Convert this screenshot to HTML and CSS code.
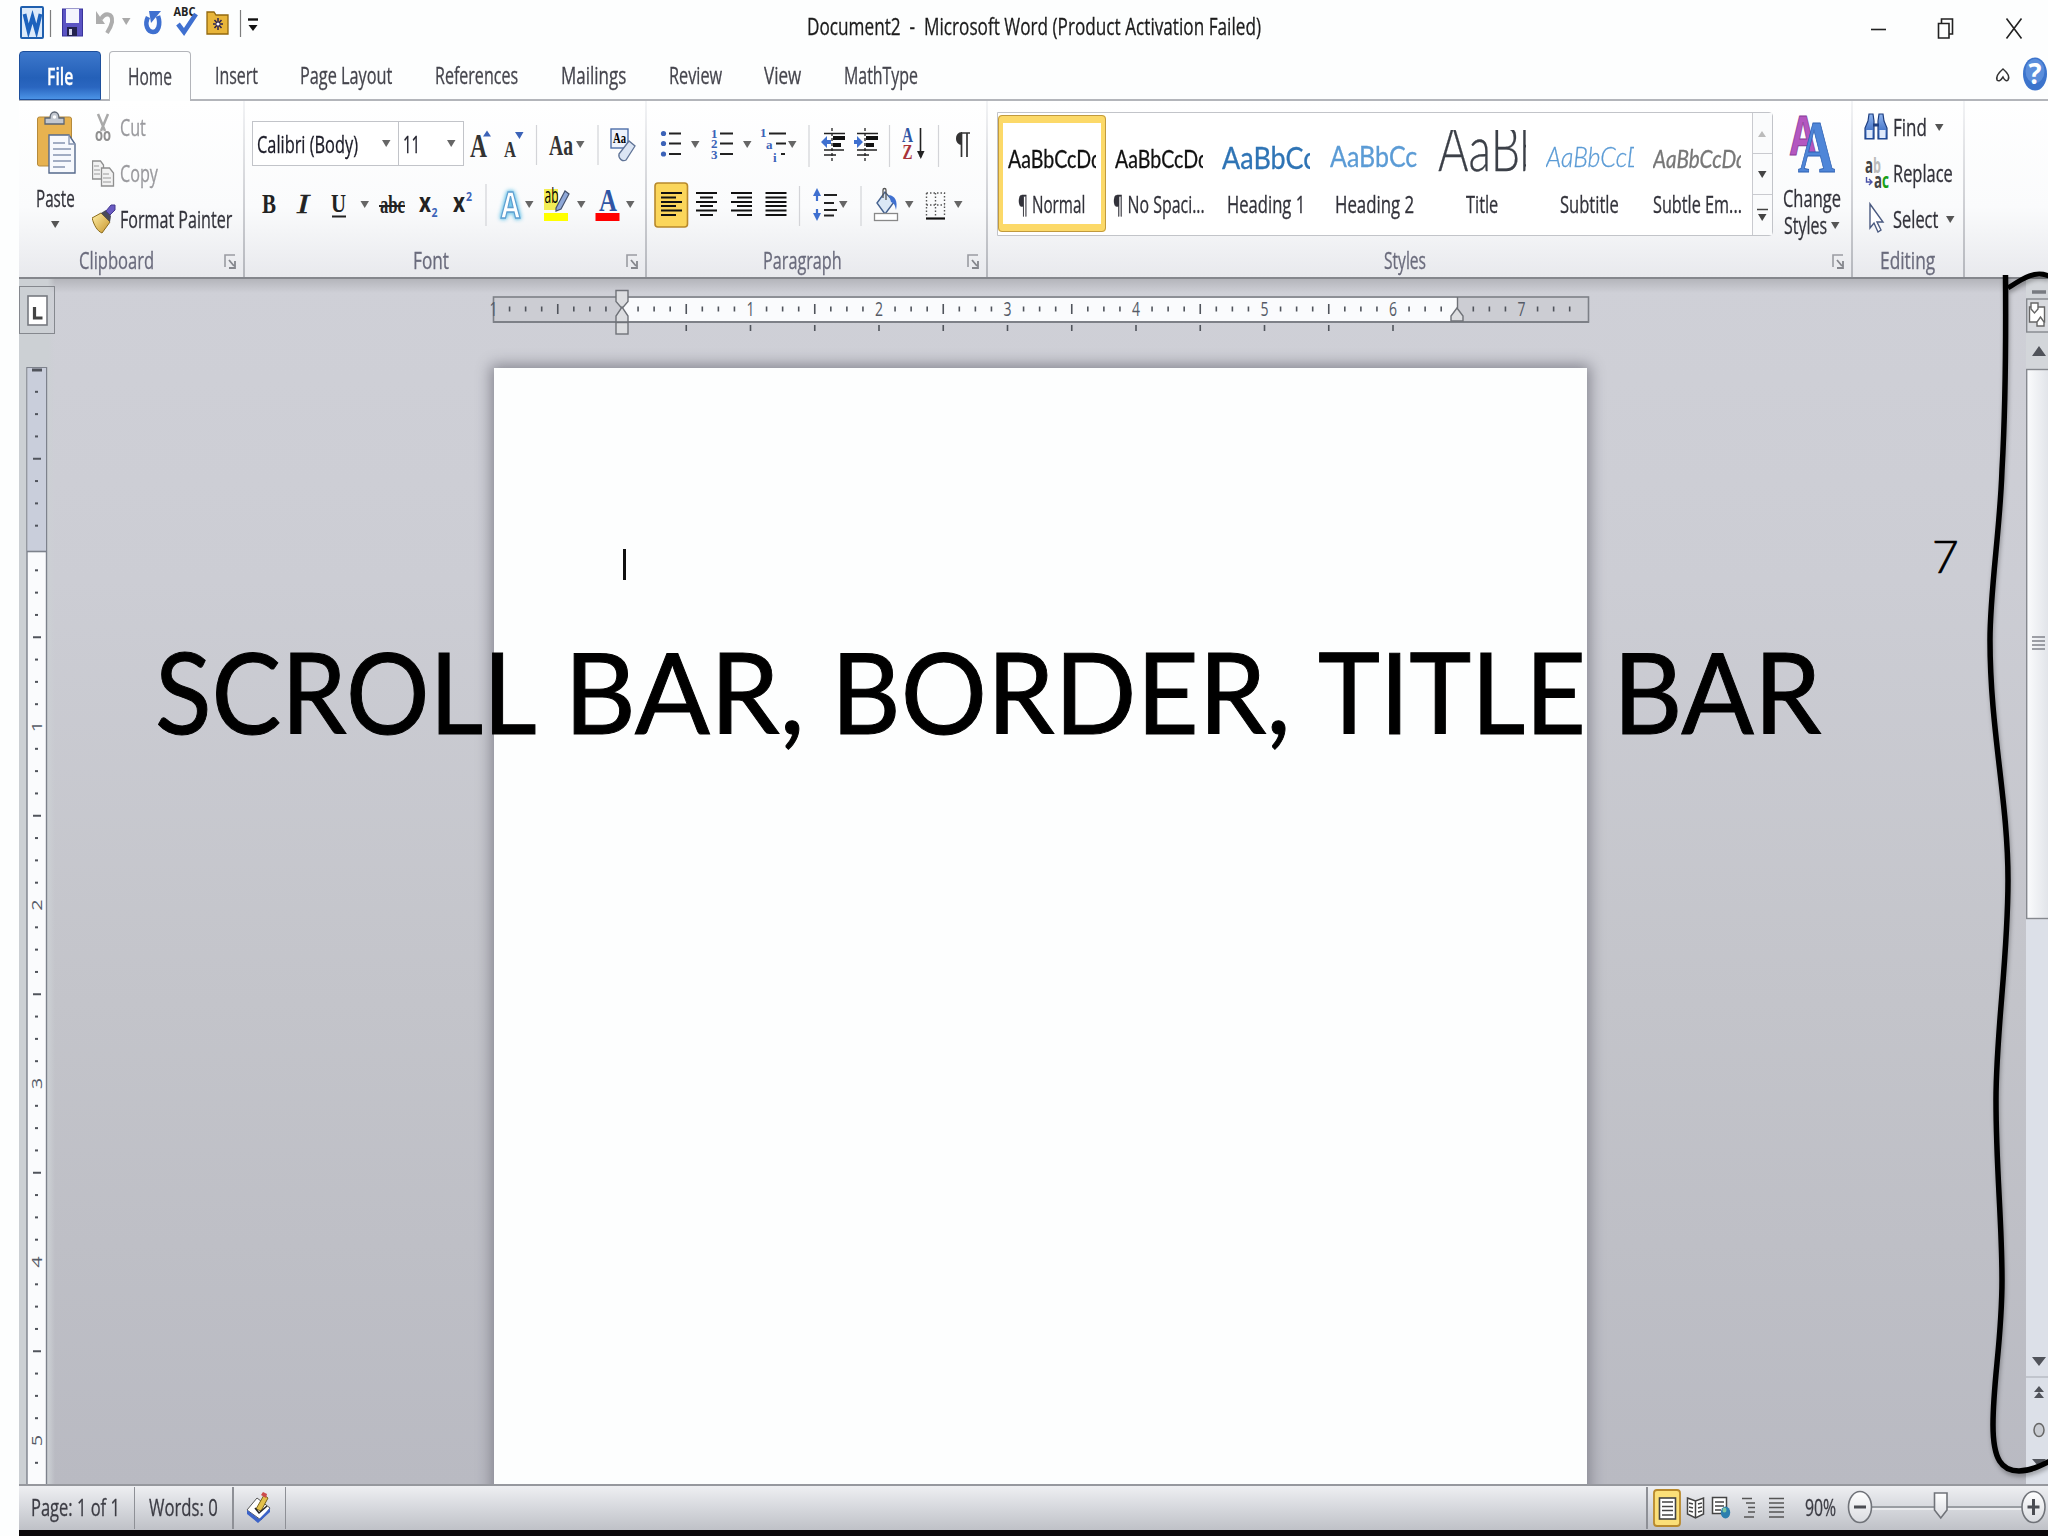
FILE: index.html
```html
<!DOCTYPE html>
<html>
<head>
    <meta charset="utf-8">
    <title>Document2 - Microsoft Word</title>
    <link rel="stylesheet" href="styles.css">
</head>
<body>
<svg width="0" height="0" class="defs">
    <defs>
        <path id="dd" d="M0 0h8.5L4.2 7z"/>
        <linearGradient id="blue" x1="0" y1="0" x2="0" y2="1"><stop offset="0" stop-color="#8fb4ee"/><stop offset="1" stop-color="#2459b8"/></linearGradient>
        <linearGradient id="gold" x1="0" y1="0" x2="1" y2="1"><stop offset="0" stop-color="#fff0a8"/><stop offset="1" stop-color="#c8942a"/></linearGradient>
        <linearGradient id="thumb" x1="0" x2="1"><stop offset="0" stop-color="#fbfcfd"/><stop offset="1" stop-color="#dcdfe5"/></linearGradient>
        <linearGradient id="knob" x1="0" y1="0" x2="0" y2="1"><stop offset="0" stop-color="#fff"/><stop offset="1" stop-color="#d9dbe0"/></linearGradient>
        <g id="launch"><path d="M1 13V1h10" fill="none" stroke="#9a9ca2" stroke-width="1.6"/><path d="M5 6l5 6M11 7v7H5" fill="none" stroke="#85878d" stroke-width="1.8"/></g>
    </defs>
</svg>
<div class="app">
    <header class="titlebar">
        <svg class="qat" width="242" height="51" viewBox="19 0 242 51">
            <rect x="21" y="7" width="22" height="31" rx="1" fill="#dceafa" stroke="#1f5fae" stroke-width="2"/>
            <path d="M24.500 14l4 17 4-14 4 14 4-17" fill="none" stroke="#1c62bd" stroke-width="3.800"/>
            <path d="M50.500 10v27M240.500 10v27" stroke="#7d7d7d" stroke-width="1.200"/>
            <rect x="62.500" y="9" width="20" height="27" fill="#5b54c4" stroke="#3a349b"/>
            <rect x="66" y="9" width="13" height="14" fill="#f3f4fd"/>
            <rect x="67" y="27" width="10" height="9" fill="#23224f"/><rect x="69" y="29" width="3" height="6" fill="#d8d8ee"/>
            <path d="M101 19c4-7 12-6 11 3-1 5-3 8-5 11" fill="none" stroke="#adadad" stroke-width="4"/><path d="M96 11v13h9z" fill="#adadad"/>
            <use href="#dd" x="122" y="18" fill="#a9a9a9"/>
            <path d="M148 17c-4 8 0 15 5 15s8-7 5-16" fill="none" stroke="#3f70d0" stroke-width="4.600"/><path d="M149 11h12l-10 12z" fill="#3f70d0"/>
            <text class="abc" x="173.500" y="16" textLength="22" lengthAdjust="spacingAndGlyphs">ABC</text>
            <path d="M178 24l6 8 12-18" fill="none" stroke="#3f70d0" stroke-width="4.600"/>
            <path d="M207 34V12h7l2 3h12v19z" fill="#e8b53a" stroke="#93680e" stroke-width="1.300"/>
            <path d="M218 18v12M213 24h10M214.500 20l7 8M221.500 20l-7 8" stroke="#2b2250" stroke-width="1.500"/><circle cx="218" cy="24" r="1.600" fill="#fff"/>
            <path d="M248 19.500h10" stroke="#111" stroke-width="2.400"/><path d="M248.500 25h9l-4.500 6z" fill="#111"/>
        </svg>
        <span class="title" data-w="454">Document2  -  Microsoft Word (Product Activation Failed)</span>
        <svg class="winbtns" width="188" height="51" viewBox="1860 0 188 51">
            <g fill="none" stroke="#222" stroke-width="1.600">
                <path d="M1871 29.500h15"/>
                <path d="M1938.500 23.500h10.500v14.500h-10.500zM1941.500 23v-4h11v15h-3"/>
                <path d="M2006.500 18.500l15 20M2021.500 18.500l-15 20"/>
            </g>
        </svg>
    </header>

    <nav class="tabs">
        <div class="tab-file"><span data-w="26">File</span></div>
        <div class="tab-home"><span data-w="44">Home</span></div>
        <span data-w="43">Insert</span>
        <span data-w="92">Page Layout</span>
        <span data-w="83">References</span>
        <span data-w="65">Mailings</span>
        <span data-w="53">Review</span>
        <span data-w="37">View</span>
        <span data-w="74">MathType</span>
        <svg class="help" width="58" height="48" viewBox="1990 51 58 48">
            <path d="M1997 80c-1-3 0-6 6-11 6 5 7 8 5 11-2 2-4-1-5-3-2 3-4 5-6 3z" fill="#fff" stroke="#333" stroke-width="1.500"/>
            <ellipse cx="2035" cy="74" rx="12" ry="16.500" fill="#3c74cc"/><ellipse cx="2035" cy="71" rx="9.500" ry="12" fill="#5b8edb"/>
            <text class="q" x="2028.500" y="84" textLength="13" lengthAdjust="spacingAndGlyphs">?</text>
        </svg>
    </nav>

    <section class="ribbon">
        <div class="group clipboard">
            <div class="body">
                <div class="paste">
                    <svg width="52" height="76" viewBox="30 106 52 76">
                        <rect x="37.500" y="117" width="34" height="49" rx="2" fill="#e7b250" stroke="#b58a3c"/>
                        <path d="M45 124v-6h5c0-8 9-8 9 0h5v6z" fill="#c3c8d0" stroke="#5e6673" stroke-width="1.300"/><circle cx="54.500" cy="117" r="1.800" fill="#fff"/>
                        <path d="M49 135h20l6 9v29H49z" fill="#f7f9fd" stroke="#566a8c" stroke-width="1.400"/>
                        <path d="M69 135v9h6M53 143h12M53 149h18M53 155h18M53 161h18M53 167h12" fill="none" stroke="#8794b0" stroke-width="1.300"/>
                    </svg>
                    <span data-w="39">Paste</span>
                    <svg class="arrow" width="9" height="7"><use href="#dd" fill="#555"/></svg>
                </div>
                <div class="rows">
                    <div class="row dim">
                        <svg width="28" height="40" viewBox="92 107 28 40"><path d="M98 114l7 17M108 114l-7 17" stroke="#a9a9a9" stroke-width="2.500"/><ellipse cx="99" cy="136" rx="2.500" ry="4" fill="none" stroke="#8f8f8f" stroke-width="2"/><ellipse cx="107" cy="136" rx="2.500" ry="4" fill="none" stroke="#8f8f8f" stroke-width="2"/></svg>
                        <span data-w="26">Cut</span>
                    </div>
                    <div class="row dim">
                        <svg width="28" height="40" viewBox="92 153 28 40"><g fill="#f2f2f2" stroke="#8f8f8f" stroke-width="1.300"><path d="M92.500 161h8l3 4v14h-11z"/><path d="M101.500 168h8l4 5v13h-12z"/></g><path d="M94 166h5M94 170h6M94 174h6M103 174h6M103 178h8M103 182h8" stroke="#999" stroke-width="1.200"/></svg>
                        <span data-w="38">Copy</span>
                    </div>
                    <div class="row">
                        <svg width="28" height="40" viewBox="92 199 28 40"><path d="M92 218l9-5 9 9-8 11c-5-2-8-8-10-15z" fill="url(#gold)" stroke="#8a6b1c"/><path d="M101 213l5-3 5 6-1 6z" fill="#4a4a5a"/><path d="M106 211l5-6h4v5l-5 5z" fill="#6a5bc2" stroke="#443a8e"/></svg>
                        <span data-w="112">Format Painter</span>
                    </div>
                </div>
            </div>
            <footer><span data-w="75">Clipboard</span><svg class="launch" width="12" height="16"><use href="#launch"/></svg></footer>
        </div>

        <div class="group font">
            <div class="body">
                <div class="combos">
                    <div class="combo name"><span data-w="101">Calibri (Body)</span><svg width="9" height="7"><use href="#dd" fill="#666"/></svg></div>
                    <div class="combo size"><span data-w="17">11</span><svg width="9" height="7"><use href="#dd" fill="#666"/></svg></div>
                    <svg width="178" height="46" viewBox="464 121 178 46">
                        <g class="serif" fill="#333">
                            <text x="470" y="157" font-size="33" textLength="17" lengthAdjust="spacingAndGlyphs">A</text>
                            <text x="504" y="157" font-size="24" textLength="12" lengthAdjust="spacingAndGlyphs">A</text>
                            <text x="549" y="155" font-size="29" textLength="24" lengthAdjust="spacingAndGlyphs">Aa</text>
                        </g>
                        <path d="M483 136.500l4-6 4 6zM515 132h8.500l-4 7z" fill="#3c63b8"/>
                        <use href="#dd" x="576" y="141" fill="#666"/>
                        <path d="M536.500 125v40M598 125v40" stroke="#d3d4d8" stroke-width="1.200"/>
                        <rect x="611" y="129" width="17" height="19" fill="#eef3fc" stroke="#4d6ea9" stroke-width="1.400"/>
                        <text class="serif" x="613" y="143" font-size="15" textLength="13" lengthAdjust="spacingAndGlyphs">Aa</text>
                        <path d="M619 154l10-13 6 5-9 14c-3 2-8-1-7-6z" fill="#dbe5f4" stroke="#5f7396" stroke-width="1.300"/>
                    </svg>
                </div>
                <svg width="392" height="50" viewBox="249 180 392 50">
                    <g class="serif" fill="#222">
                        <text x="262" y="213" font-size="28" textLength="14" lengthAdjust="spacingAndGlyphs">B</text>
                        <text class="it" x="297" y="213" font-size="28" textLength="12" lengthAdjust="spacingAndGlyphs">I</text>
                        <text x="331" y="212" font-size="26" textLength="15" lengthAdjust="spacingAndGlyphs">U</text>
                        <text x="380" y="213" font-size="26" textLength="25" lengthAdjust="spacingAndGlyphs">abc</text>
                    </g>
                    <path d="M332 216.500h14M379 206h26" stroke="#222" stroke-width="2"/>
                    <g class="sans" fill="#222">
                        <text x="419" y="212" font-size="26" textLength="12" lengthAdjust="spacingAndGlyphs">x</text>
                        <text x="453" y="212" font-size="26" textLength="12" lengthAdjust="spacingAndGlyphs">x</text>
                        <text x="431.500" y="217" font-size="13" textLength="6" lengthAdjust="spacingAndGlyphs" fill="#3c63b8">2</text>
                        <text x="466" y="201" font-size="13" textLength="6" lengthAdjust="spacingAndGlyphs" fill="#3c63b8">2</text>
                    </g>
                    <path d="M486 184v42" stroke="#d3d4d8" stroke-width="1.200"/>
                    <text class="sans glow" x="501" y="218" font-size="36" textLength="19" lengthAdjust="spacingAndGlyphs">A</text>
                    <rect x="544" y="189" width="14" height="21" fill="#f3ee55"/><rect x="544" y="213" width="24" height="8" fill="#ff0"/>
                    <text class="sansr" x="544.500" y="203" font-size="21" textLength="14" lengthAdjust="spacingAndGlyphs">ab</text>
                    <path d="M556 208l9-17 4 3-8 15-5 2z" fill="#8fa8d8" stroke="#45526e" stroke-width="1.200"/>
                    <text class="serif" x="599" y="211" font-size="32" textLength="18" lengthAdjust="spacingAndGlyphs" fill="#2f55a4">A</text>
                    <rect x="595.500" y="213" width="24" height="8" fill="#f00"/>
                    <g fill="#666"><use href="#dd" x="360.500" y="201"/><use href="#dd" x="525" y="201"/><use href="#dd" x="577" y="201"/><use href="#dd" x="626" y="201"/></g>
                </svg>
            </div>
            <footer><span data-w="36">Font</span><svg class="launch" width="12" height="16"><use href="#launch"/></svg></footer>
        </div>

        <div class="group paragraph">
            <div class="body">
                <svg width="330" height="130" viewBox="650 108 330 130">
                    <g fill="#3c63b8"><circle cx="663.500" cy="133.500" r="2.600"/><circle cx="663.500" cy="143.500" r="2.600"/><circle cx="663.500" cy="154" r="2.600"/></g>
                    <path d="M669 133.500h12M669 143.500h12M669 154h12M720 133.500h13M720 143.500h13M720 154h13M769 133.500h17M776 143.500h10M781 154h4" stroke="#222" stroke-width="2"/>
                    <g class="serif" fill="#3c63b8" font-size="13">
                        <text x="711" y="138">1</text><text x="711" y="148">2</text><text x="711" y="159">3</text>
                        <text x="760" y="137">1</text><text x="766" y="149">a</text><text x="773" y="162">i</text>
                    </g>
                    <path d="M832 128v33M865 128v33" stroke="#222" stroke-width="1.300" stroke-dasharray="3 2"/>
                    <path d="M824 133.500h21M824 150h20M824 155h12M857 133.500h21M857 150h20M857 155h12" stroke="#222" stroke-width="1.600"/>
                    <path d="M833 136h12v4h-12zM833 143h8v4h-8zM866 136h12v4h-12zM866 143h8v4h-8z" fill="#111"/>
                    <path d="M821 142l6-6v4h4v4h-4v4zM863 142l-6-6v4h-3v4h3v4z" fill="#3f70d0"/>
                    <text class="serif" x="902" y="142" font-size="20" textLength="11" lengthAdjust="spacingAndGlyphs" fill="#2f55a4">A</text>
                    <text class="serif" x="902.500" y="159" font-size="20" textLength="10" lengthAdjust="spacingAndGlyphs" fill="#a8323a">Z</text>
                    <path d="M920.500 128v29" stroke="#222" stroke-width="1.600"/><path d="M917 151h7.500l-3.700 8z" fill="#222"/>
                    <path d="M970 133h-9M961.500 133v24M967 133v24" fill="none" stroke="#333" stroke-width="1.700"/><path d="M962 132c-8 0-8 13 0 13z" fill="#333"/>
                    <path d="M809 125v42M889.500 125v42M938.500 125v42M799.500 186v40M861 186v40" stroke="#d3d4d8" stroke-width="1.200"/>
                    <rect x="655" y="183" width="32.500" height="44" rx="3" fill="#fbd65b" stroke="#b8892c" stroke-width="1.600"/>
                    <path d="M661 193h21M661 197.500h15M661 202h21M661 206h15M661 210.500h21M661 215h15
                        M696 193h21M700 197.500h13M696 202h21M700 206h13M696 210.500h21M700 215h13
                        M731 193h21M737 197.500h15M731 202h21M737 206h15M731 210.500h21M737 215h15
                        M765.500 193h21M765.500 197.500h21M765.500 202h21M765.500 206h21M765.500 210.500h21M765.500 215h21" stroke="#111" stroke-width="2"/>
                    <path d="M817 194v7M817 209v7" stroke="#3f70d0" stroke-width="2.200"/><path d="M813 196l4-8 4 8zM813 213l4 8 4-8z" fill="#3f70d0"/>
                    <path d="M824 195h13M824 203h10M824 210h13M824 215.500h10" stroke="#222" stroke-width="1.800"/>
                    <path d="M877 203l8-11 9 10-9 12z" fill="#dbe8f6" stroke="#44618f" stroke-width="1.400"/><path d="M883 198v-8c0-2 3-2 3 0v10" fill="none" stroke="#555" stroke-width="1.300"/><path d="M889 195c6 1 9 6 7 15-1-5-2-7-5-8z" fill="#3f70d0"/>
                    <rect x="874.500" y="213.500" width="23" height="7" fill="#fff" stroke="#888" stroke-width="1.300"/>
                    <path d="M926.500 193h18v24M926.500 193v24M935.500 193v24M926.500 205h18" fill="none" stroke="#555" stroke-width="1.400" stroke-dasharray="1.500 2"/><path d="M926 218.500h19" stroke="#111" stroke-width="2.200"/>
                    <g fill="#666"><use href="#dd" x="691" y="141"/><use href="#dd" x="743" y="141"/><use href="#dd" x="788" y="141"/><use href="#dd" x="839" y="201"/><use href="#dd" x="905" y="201"/><use href="#dd" x="954" y="201"/></g>
                </svg>
            </div>
            <footer><span data-w="79">Paragraph</span><svg class="launch" width="12" height="16"><use href="#launch"/></svg></footer>
        </div>

        <div class="group styles">
            <div class="body">
                <div class="gallery">
                    <div class="cell selected"><div class="sample"><span data-w="94">AaBbCcDd</span></div><span class="cap" data-w="67">¶ Normal</span></div>
                    <div class="cell"><div class="sample"><span data-w="94">AaBbCcDd</span></div><span class="cap" data-w="92">¶ No Spaci...</span></div>
                    <div class="cell h1"><div class="sample"><span data-w="94">AaBbCc</span></div><span class="cap" data-w="78">Heading 1</span></div>
                    <div class="cell h2"><div class="sample"><span data-w="87">AaBbCc</span></div><span class="cap" data-w="79">Heading 2</span></div>
                    <div class="cell ttl"><div class="sample"><span data-w="107">AaBb</span></div><span class="cap" data-w="32">Title</span></div>
                    <div class="cell sub"><div class="sample"><span data-w="98">AaBbCcD</span></div><span class="cap" data-w="59">Subtitle</span></div>
                    <div class="cell emph"><div class="sample"><span data-w="94">AaBbCcDd</span></div><span class="cap" data-w="89">Subtle Em...</span></div>
                    <div class="scroll">
                        <i><svg width="9" height="7"><path d="M0 7h8L4 1z" fill="#bbb"/></svg></i>
                        <i><svg width="9" height="7"><use href="#dd" fill="#444"/></svg></i>
                        <i><svg width="11" height="14"><path d="M0 1.500h11" stroke="#444" stroke-width="1.500"/><path d="M1 6h8.500L5.200 13z" fill="#444"/></svg></i>
                    </div>
                </div>
                <div class="change">
                    <svg width="50" height="76" viewBox="1787 106 50 76">
                        <text class="sans" x="1790" y="155" font-size="54" textLength="26" lengthAdjust="spacingAndGlyphs" fill="#b457c0" stroke="#8a3c98">A</text>
                        <text class="serif" x="1798" y="172" font-size="75" textLength="37" lengthAdjust="spacingAndGlyphs" fill="#4f86d8" stroke="#2f62b4">A</text>
                    </svg>
                    <span data-w="58">Change</span>
                    <div><span data-w="43">Styles</span><svg width="9" height="7"><use href="#dd" fill="#555"/></svg></div>
                </div>
            </div>
            <footer><span data-w="42">Styles</span><svg class="launch" width="12" height="16"><use href="#launch"/></svg></footer>
        </div>

        <div class="group editing">
            <div class="body">
                <div class="rows">
                    <div class="row">
                        <svg width="30" height="40" viewBox="1863 107 30 40"><g fill="url(#blue)" stroke="#1f3f80" stroke-width="1.200"><path d="M1865 139v-11l3-7 1-7h4l1 7v18zM1887 139v-11l-3-7-1-7h-4l-1 7v18z"/></g><path d="M1866.500 130h6v8h-6zM1879.500 130h6v8h-6z" fill="#dfe9fa"/><path d="M1873 125h6" stroke="#1f3f80" stroke-width="3"/></svg>
                        <span data-w="34">Find</span><svg width="9" height="7"><use href="#dd" fill="#555"/></svg>
                    </div>
                    <div class="row">
                        <svg width="30" height="40" viewBox="1863 153 30 40"><g class="sans" font-size="21"><text x="1865" y="173" fill="#444" textLength="8" lengthAdjust="spacingAndGlyphs">a</text><text x="1873" y="173" fill="#bbb" textLength="8" lengthAdjust="spacingAndGlyphs">b</text><text x="1874" y="188" fill="#444" textLength="8" lengthAdjust="spacingAndGlyphs">a</text><text x="1882" y="188" fill="#18a018" textLength="7" lengthAdjust="spacingAndGlyphs">c</text></g><path d="M1866.500 177v5h5M1869 179l3 3-3 3" fill="none" stroke="#4a52a8" stroke-width="1.400"/></svg>
                        <span data-w="60">Replace</span>
                    </div>
                    <div class="row">
                        <svg width="30" height="40" viewBox="1863 199 30 40"><path d="M1870 204v24l4-5 4 9 3-2-4-8h6z" fill="#fff" stroke="#4a5a80" stroke-width="1.400"/></svg>
                        <span data-w="45">Select</span><svg width="9" height="7"><use href="#dd" fill="#555"/></svg>
                    </div>
                </div>
            </div>
            <footer><span data-w="55">Editing</span></footer>
        </div>
    </section>

    <main class="workspace">
        <div class="side">
            <div class="tabstop"><svg width="21" height="31"><rect x="1" y="1" width="19" height="29" fill="#fff" stroke="#777a80" stroke-width="1.600"/><path d="M7.500 12v11h8" fill="none" stroke="#444" stroke-width="3.200"/></svg></div>
            <svg id="vruler" width="22" height="1118" viewBox="26 367 22 1118">
                <rect x="27" y="367.500" width="19.500" height="1130" fill="#fafbfd" stroke="#7d828c" stroke-width="1.400"/>
                <rect x="27.500" y="368" width="18.500" height="183" fill="#c9cedb"/>
                <path d="M27 551.500h19.500" stroke="#7d828c" stroke-width="1.600"/>
            </svg>
        </div>
        <div class="canvas">
            <svg id="hruler" width="1115" height="54" viewBox="485 286 1115 54">
                <rect x="493.500" y="297" width="1095" height="25" fill="#cccdd3" stroke="#7d8087" stroke-width="1.600"/>
                <rect x="622" y="298" width="835" height="23.500" fill="#fafbfd"/>
                <path d="M493 322h1096" stroke="#7d8087" stroke-width="2"/>
                <g fill="#dcdde0" stroke="#6f7278" stroke-width="1.400">
                    <path d="M616 290.500h12v11l-6 7-6-7z"/><path d="M616 322v-6l6-9 6 9v6z"/><rect x="616" y="322.500" width="12" height="11.500"/>
                    <path d="M1451 321v-5l6-8 6 8v5z"/><path d="M1457.500 297v11"/>
                </g>
            </svg>
            <div class="page"><i class="caret"></i></div>
            <div class="note"><span data-w="382">SCROLL</span> <span data-w="241">BAR,</span> <span data-w="460">BORDER,</span> <span data-w="268">TITLE</span> <span data-w="208">BAR</span></div>
            <div class="num">7</div>
        </div>
        <svg class="vscroll" width="22" height="1206" viewBox="2026 279 22 1206">
            <rect x="2026" y="279" width="22" height="1206" fill="#dce0e8"/>
            <rect x="2026" y="279" width="22" height="90" fill="#d3d6da"/>
            <path d="M2032 292h14" stroke="#777a80" stroke-width="3.500"/>
            <rect x="2026.700" y="299" width="25" height="33" fill="#d8dade" stroke="#85888e" stroke-width="1.400"/>
            <g fill="#fff" stroke="#666" stroke-width="1.400"><path d="M2029.500 307h15v15h-15z"/><path d="M2031 303h7v6l-3.500 4-3.500-4zM2037 326v-4l3.500-5 3.500 5v4z"/></g>
            <path d="M2032 356h14l-7-10zM2032 1357h14l-7 9z" fill="#50535a"/>
            <rect x="2026.700" y="369.500" width="26" height="549" fill="url(#thumb)" stroke="#85888e" stroke-width="1.400"/>
            <path d="M2032 637h13M2032 641h13M2032 645h13M2032 649h13" stroke="#80838a" stroke-width="1.500"/>
            <path d="M2026 1377h22" stroke="#b9bcc4" stroke-width="1.500"/>
            <path d="M2034 1392h10l-5-6zM2034 1398h10l-5-6zM2032 1459h14l-7 8z" fill="#50535a"/>
            <ellipse cx="2039" cy="1430" rx="5" ry="6.500" fill="#c9ccd2" stroke="#666" stroke-width="1.500"/>
        </svg>
    </main>

    <footer class="status">
        <span data-w="89">Page: 1 of 1</span><b></b>
        <span data-w="69">Words: 0</span><b></b>
        <svg width="28" height="36" viewBox="243 1488 28 36"><path d="M245 1508l10-12 13 10-9 12z" fill="#fff" stroke="#555"/><path d="M245 1508l12 9 11-11v4l-12 11-11-9z" fill="#3c63c8"/><path d="M254 1507l8-14 4 3-7 13z" fill="#e2c04a" stroke="#7a6420"/><path d="M259 1493l2-3 4 2-1 4z" fill="#cc4a4a"/><path d="M253 1506l4 5 8-7" fill="none" stroke="#222" stroke-width="1.500"/></svg><b></b>
        <div class="views">
            <b></b>
            <svg width="140" height="44" viewBox="1650 1486 140 44">
                <rect x="1654" y="1490" width="26" height="36" rx="3" fill="#fbdf78" stroke="#b8892c" stroke-width="1.800"/>
                <rect x="1659.500" y="1498" width="16" height="21" fill="#fff" stroke="#444" stroke-width="1.600"/>
                <path d="M1662 1502h11M1662 1506.500h11M1662 1510.500h11M1662 1515h11" stroke="#444" stroke-width="1.500"/>
                <path d="M1687.500 1498l8 3 8-3v16l-8 4-8-4zM1695.500 1501v17" fill="#fff" stroke="#444" stroke-width="1.500"/>
                <path d="M1689 1503l4 1M1689 1507l4 1M1689 1511l4 1M1698 1504l4-1M1698 1508l4-1M1698 1512l4-1" stroke="#444" stroke-width="1.400"/>
                <rect x="1712.500" y="1497.500" width="14" height="16" fill="#fff" stroke="#444" stroke-width="1.500"/><path d="M1715 1502h9M1715 1506h9M1715 1510h6" stroke="#444" stroke-width="1.400"/>
                <ellipse cx="1725.500" cy="1512.500" rx="4.700" ry="6" fill="#2c7fae"/><ellipse cx="1724.500" cy="1510" rx="2" ry="2.500" fill="#7cc5a0"/>
                <path d="M1742 1498.500h10M1746 1503h9M1748 1507.500h7M1748 1512h7M1744 1517h10M1769 1498.500h15M1769 1503h15M1769 1507.500h15M1769 1512h15M1769 1517h15" stroke="#555" stroke-width="1.700"/>
            </svg>
            <span data-w="31">90%</span>
            <svg width="202" height="44" viewBox="1846 1486 202 44">
                <path d="M1872 1507h150" stroke="#85888e" stroke-width="1.600"/><path d="M1872 1509h150" stroke="#fff"/>
                <g fill="url(#knob)" stroke="#707379" stroke-width="1.600">
                    <ellipse cx="1860" cy="1507" rx="11.500" ry="15.500"/><ellipse cx="2033.500" cy="1507" rx="11.500" ry="15.500"/>
                    <path d="M1934.500 1493h12.500v17l-6.200 8-6.300-8z"/>
                </g>
                <path d="M1854 1507h12M2027.500 1507h12M2033.500 1499v16" stroke="#4a4c52" stroke-width="3"/>
            </svg>
        </div>
    </footer>
</div>

<!-- hand drawn marker around the scroll bar -->
<svg class="ink" width="78" height="1216" viewBox="1970 266 78 1216">
    <path d="M2005.500 275C2006 340 2006 400 2002 470C2000 530 1990 590 1990 640C1990 730 2008 800 2008 880C2008 960 1996 1030 1996 1100C1996 1170 2002 1220 2002 1280C2002 1340 1993 1380 1993 1425C1993 1460 2002 1471 2019 1471C2030 1471 2040 1466 2050 1461" fill="none" stroke="#000" stroke-width="5.500"/>
    <path d="M2008 288C2022 279 2034 270 2049 276" fill="none" stroke="#000" stroke-width="5"/>
</svg>
<script src="script.js"></script>
</body>
</html>
```
FILE: styles.css
```css
body {
    margin: 0;
    width: 2048px;
    height: 1536px;
    overflow: hidden;
    position: relative;
    background: #fdfefe;
    font-family: "Open Sans", "Noto Sans", sans-serif;
    font-size: 23px;
    color: #3b3b44;
}

svg {
    display: block;
    flex: none;
}

.defs {
    position: absolute;
}

/* labels are squeezed to data-w by script.js */
[data-w] {
    display: inline-block;
    white-space: pre;
    transform-origin: 0 50%;
    flex: none;
    -webkit-text-stroke: 0.3px;
}

.serif {
    font-family: "Liberation Serif", serif;
    font-weight: bold;
}

.serif .it {
    font-style: italic;
    font-weight: normal;
    stroke: #222;
    stroke-width: 0.6px;
}

.sans {
    font-family: "Open Sans", sans-serif;
    font-weight: bold;
}

.sansr {
    font-family: "Open Sans", sans-serif;
}

.glow {
    fill: #fff;
    stroke: #5f9fd0;
    stroke-width: 1.5px;
    filter: drop-shadow(0 0 2px #6cc4e8) drop-shadow(0 0 1px #8fd3ee);
}

.abc {
    font: bold 13px "Open Sans", sans-serif;
    fill: #222;
}

.q {
    font: bold 28px "Open Sans", sans-serif;
    fill: #fff;
}

.app {
    display: flex;
    flex-direction: column;
    margin-left: 19px;
    height: 1530px;
    border-bottom: 6px solid #0b0709;
}

/* title bar */

.titlebar {
    display: flex;
    height: 51px;
}

.title {
    margin-left: 546px;
    font-size: 24px;
    line-height: 51px;
    color: #1c1c1c;
}

.winbtns, .help {
    margin-left: auto;
}

/* tabs */

.tabs {
    display: flex;
    height: 48px;
    line-height: 49px;
    gap: 42.4px;
    border-bottom: 2px solid #b3b5ba;
    color: #45454d;
}

.tab-file {
    width: 80px;
    height: 47px;
    margin-right: -34.4px;
    border: 1px solid #1d4f9c;
    border-radius: 4px 4px 0 0;
    background: linear-gradient(#3d78cc, #2460b8 55%, #2a66c0 75%, #4b93e6);
    color: #fff;
    display: flex;
    justify-content: center;
    font-weight: 600;
}

.tab-home {
    width: 80px;
    height: 49px;
    margin-right: -18.4px;
    border: 1px solid #b3b5ba;
    border-bottom: 0;
    border-radius: 4px 4px 0 0;
    background: #fdfefe;
    display: flex;
    justify-content: center;
}

/* ribbon */

.ribbon {
    display: flex;
    height: 176px;
    background: linear-gradient(#fff, #fafbfc 60%, #e8e9ed);
    border-bottom: 2px solid #84868c;
    color: #32323a;
}

.group {
    display: flex;
    flex-direction: column;
    box-sizing: border-box;
    border-right: 2px solid;
    border-image: linear-gradient(#f3f4f6, #b4b6bc) 1;
}

.group .body {
    display: flex;
    flex: 1;
    height: 140px;
}

.group footer {
    display: flex;
    justify-content: center;
    position: relative;
    height: 36px;
    line-height: 38px;
    color: #6a6b7c;
}

.launch {
    position: absolute;
    right: 7px;
    top: 13px;
}

.clipboard { width: 226px; }
.font { width: 402px; }
.paragraph { width: 341px; }
.styles { width: 865px; }
.editing { width: 112px; }

.clipboard footer { padding-right: 28px; }
.font footer { padding-right: 28px; }
.paragraph footer { padding-right: 28px; }
.styles footer { padding-right: 28px; }

.paste {
    width: 73px;
    padding-top: 5px;
    display: flex;
    flex-direction: column;
    align-items: center;
    line-height: 32px;
    box-sizing: border-box;
}

.paste .arrow {
    margin-top: 7px;
}

.rows {
    padding-top: 3px;
}

.row {
    display: flex;
    align-items: center;
    height: 46px;
    line-height: 46px;
}

.row.dim {
    color: #9a9a9e;
}

.row span + svg {
    margin: 0 0 0 8px;
}

.group.font .body {
    flex-direction: column;
    padding: 20px 0 0 4px;
    box-sizing: border-box;
}

.font .combos {
    display: flex;
    margin-left: 3px;
    height: 46px;
    margin-bottom: 13px;
}

.combo {
    display: flex;
    align-items: center;
    justify-content: space-between;
    box-sizing: border-box;
    height: 45px;
    line-height: 42px;
    padding: 0 7px 0 4px;
    border: 1.5px solid #c2c4c9;
    background: #fff;
    color: #1c1c28;
}

.combo.name { width: 147px; }
.combo.size { width: 65px; border-left: 0; }

.paragraph .body {
    padding: 7px 0 0 3px;
    box-sizing: border-box;
}

/* style gallery */

.styles .body {
    padding: 11px 0 0 9px;
    box-sizing: border-box;
}

.gallery {
    display: flex;
    width: 778px;
    height: 124px;
    box-sizing: border-box;
    border: 1.5px solid #c2c4c9;
    border-radius: 0 4px 4px 0;
    background: #fff;
}

.cell {
    width: 107.7px;
    height: 117px;
    margin-top: 2px;
    display: flex;
    flex-direction: column;
    align-items: center;
    box-sizing: border-box;
    padding: 15px 1.5px 0 0;
    line-height: 33px;
    flex: none;
}

.cell.selected {
    padding: 7px 0 0;
    border: solid #fcd968;
    border-width: 8px 5px;
    border-radius: 4px;
    outline: 1.5px solid #c19a3e;
    outline-offset: -1px;
}

.sample {
    width: 88px;
    height: 58px;
    overflow: hidden;
    font-family: Lato, sans-serif;
    font-size: 25px;
    line-height: 56px;
    color: #111;
}

.h1 .sample { font-size: 31px; line-height: 54px; color: #2f74b5; }
.h2 .sample { font-size: 29px; line-height: 52px; color: #5b9bd5; }
.ttl .sample { font-size: 64px; line-height: 34px; color: #3c4048; font-weight: 300; }
.sub .sample { font-size: 28px; line-height: 52px; color: #5b9bd5; font-style: italic; font-weight: 300; }
.emph .sample { font-size: 25px; color: #777; font-style: italic; }

.scroll {
    flex: 1;
    display: flex;
    flex-direction: column;
    border-left: 1.5px solid #c9cacf;
    background: #fafbfc;
}

.scroll i {
    flex: 1;
    display: flex;
    align-items: center;
    justify-content: center;
}

.scroll i + i {
    border-top: 1.5px solid #c9cacf;
}

.change {
    width: 78px;
    margin-top: -6px;
    display: flex;
    flex-direction: column;
    align-items: center;
    line-height: 27px;
}

.change > span {
    margin-top: 3px;
}

.change div {
    display: flex;
    align-items: center;
    gap: 4px;
}

.editing .rows {
    padding-left: 10px;
}

/* document area */

.workspace {
    display: flex;
    height: 1205px;
    background: linear-gradient(#b4b5bb, rgba(206, 207, 213, 0) 14px), linear-gradient(#cfd0d7, #cccdd4 25%, #c3c4ca 60%, #b9bac2);
    border-bottom: 2px solid #96989e;
    overflow: hidden;
}

.side {
    width: 36px;
    padding-top: 7px;
    flex: none;
    background: linear-gradient(90deg, #ccd0d4 80%, rgba(204, 208, 212, 0));
}

.tabstop {
    width: 34px;
    height: 46px;
    display: flex;
    align-items: center;
    justify-content: center;
    border: 1.5px solid #85888e;
}

#vruler {
    margin: 33px 0 0 7px;
}

.canvas {
    flex: 1;
    position: relative;
}

#hruler {
    margin: 7px 0 0 430px;
}

.page {
    width: 1093px;
    height: 1130px;
    margin: 28px 0 0 439px;
    background: #fdfefe;
    box-shadow: 0 0 14px 3px #85858f;
}

.caret {
    display: block;
    width: 3px;
    height: 31px;
    margin-left: 129px;
    position: relative;
    top: 181px;
    background: #111;
}

/* caption laid over the page */
.note {
    position: absolute;
    left: 100px;
    top: 342px;
    display: flex;
    gap: 27px;
    font-family: Lato, sans-serif;
    font-size: 112px;
    line-height: 140px;
    color: #000;
}

.note span {
    -webkit-text-stroke: 1px;
}

.num {
    position: absolute;
    left: 1877px;
    top: 249px;
    font-family: Lato, sans-serif;
    font-weight: 300;
    font-size: 46px;
    line-height: 56px;
    color: #000;
    -webkit-text-stroke: 0.7px;
}

.tick-label {
    font: 20px "Open Sans", sans-serif;
    fill: #555a66;
}

/* status bar */

.status {
    display: flex;
    align-items: center;
    height: 44px;
    padding-left: 12px;
    background: linear-gradient(#eeeff2, #d6d8dd 50%, #bfc1c7);
    color: #3c3c44;
}

.status span {
    line-height: 40px;
    padding-bottom: 3px;
}

.status b {
    width: 1.5px;
    height: 42px;
    background: #8e9096;
    margin: 0 14px;
    flex: none;
}

.status svg + b {
    margin-left: 12px;
}

.status > svg {
    margin-left: -3px;
}

.views {
    display: flex;
    align-items: center;
    margin-left: auto;
}

.views b {
    margin: 0 2px 0 0;
}

.views span {
    margin: 0 10px 0 15px;
}

.ink {
    position: absolute;
    left: 1970px;
    top: 266px;
    filter: drop-shadow(1px 3px 2px rgba(0, 0, 0, 0.3));
}
```
FILE: script.js
```javascript
// squeeze each label to its width, keeping the flow in step
document.querySelectorAll('[data-w]').forEach(function (el) {
    var w = Number(el.dataset.w);
    var natural = el.offsetWidth;
    el.style.transform = 'scaleX(' + w / natural + ')';
    el.style.marginRight = (parseFloat(getComputedStyle(el).marginRight) + w - natural) + 'px';
});

var NS = 'http://www.w3.org/2000/svg';

function line(svg, x1, y1, x2, y2, width) {
    var p = document.createElementNS(NS, 'path');
    p.setAttribute('d', 'M' + x1 + ' ' + y1 + 'L' + x2 + ' ' + y2);
    p.setAttribute('stroke', '#50545c');
    p.setAttribute('stroke-width', width || 1.6);
    svg.appendChild(p);
}

function label(svg, text, x, y, transform) {
    var t = document.createElementNS(NS, 'text');
    t.textContent = text;
    t.setAttribute('class', 'tick-label');
    t.setAttribute('text-anchor', 'middle');
    t.setAttribute('transform', 'translate(' + x + ' ' + y + ') ' + transform);
    svg.appendChild(t);
}

// horizontal ruler, eighths of an inch
var h = document.getElementById('hruler');
for (var i = -8; i <= 59; i++) {
    var x = 622 + i * 128.5 / 8;
    if (i === 0 || i === 52) continue;
    if (i % 8 === 0) {
        label(h, Math.abs(i / 8), x, 316, 'scale(.7 1)');
    } else if (i % 4 === 0) {
        line(h, x, 304, x, 314);
    } else {
        line(h, x, 306.5, x, 311.5);
    }
    if (i > 0 && i < 52 && i % 4 === 0) line(h, x, 325, x, 331);
}

// vertical ruler
var v = document.getElementById('vruler');
for (var j = -7; j <= 41; j++) {
    var y = 548 + j * 178.5 / 8;
    if (j === 0) continue;
    if (j % 8 === 0) {
        label(v, j / 8, 42, y, 'rotate(-90) scale(1 .7)');
    } else if (j % 4 === 0) {
        line(v, 33, y, 41, y, 2);
    } else {
        line(v, 35, y, 38, y, 2);
    }
}
line(v, 32, 370, 42, 370, 3);
```
